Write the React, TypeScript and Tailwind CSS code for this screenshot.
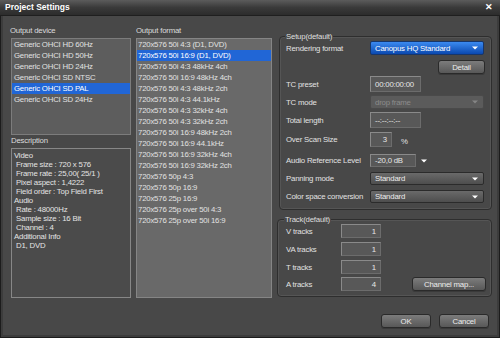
import React from 'react';

const devices = [
  'Generic OHCI HD 60Hz',
  'Generic OHCI HD 50Hz',
  'Generic OHCI HD 24Hz',
  'Generic OHCI SD NTSC',
  'Generic OHCI SD PAL',
  'Generic OHCI SD 24Hz',
];

const formats = [
  '720x576 50i 4:3 (D1, DVD)',
  '720x576 50i 16:9 (D1, DVD)',
  '720x576 50i 4:3 48kHz 4ch',
  '720x576 50i 16:9 48kHz 4ch',
  '720x576 50i 4:3 48kHz 2ch',
  '720x576 50i 4:3 44.1kHz',
  '720x576 50i 4:3 32kHz 4ch',
  '720x576 50i 4:3 32kHz 2ch',
  '720x576 50i 16:9 48kHz 2ch',
  '720x576 50i 16:9 44.1kHz',
  '720x576 50i 16:9 32kHz 4ch',
  '720x576 50i 16:9 32kHz 2ch',
  '720x576 50p 4:3',
  '720x576 50p 16:9',
  '720x576 25p 16:9',
  '720x576 25p over 50i 4:3',
  '720x576 25p over 50i 16:9',
];

const description = [
  'Video',
  ' Frame size : 720 x 576',
  ' Frame rate : 25,00( 25/1 )',
  ' Pixel aspect : 1,4222',
  ' Field order : Top Field First',
  'Audio',
  ' Rate : 48000Hz',
  ' Sample size : 16 Bit',
  ' Channel : 4',
  'Additional Info',
  ' D1, DVD',
];

function Arrow({ dim }: { dim?: boolean }) {
  return (
    <svg width="6" height="4" viewBox="0 0 6 4" className="shrink-0">
      <path d="M0 0.5h6L3 3.5z" fill={dim ? '#858585' : '#ffffff'} />
    </svg>
  );
}

function Select({ text, kind }: { text: string; kind: 'blue' | 'grey' | 'off' }) {
  const look =
    kind === 'blue'
      ? 'bg-gradient-to-b from-[#3b8af0] to-[#0a48b0] border-[#17366a] text-white'
      : kind === 'grey'
        ? 'bg-gradient-to-b from-[#6a6a6a] to-[#4e4e4e] border-[#2b2b2b] text-[#ececec]'
        : 'bg-[#5b5b5b] border-[#4a4a4a] text-[#8c8c8c]';
  return (
    <div className={`w-[114px] h-full flex items-center justify-between pl-[4px] pr-[5px] border rounded-[2px] ${look}`}>
      <span>{text}</span>
      <Arrow dim={kind === 'off'} />
    </div>
  );
}

function Field({ text, w, right }: { text: string; w: string; right?: boolean }) {
  return (
    <div
      className={`${w} h-full flex items-center px-[4px] bg-[#585858] border border-t-[#8a8a8a] border-l-[#8a8a8a] border-b-[#6c6c6c] border-r-[#6c6c6c] text-[#e6e6e6] ${right ? 'justify-end' : ''}`}
    >
      {text}
    </div>
  );
}

function Button({ text, w }: { text: string; w: string }) {
  return (
    <div
      className={`${w} h-[14px] flex items-center justify-center rounded-[3px] border border-[#2a2a2a] bg-gradient-to-b from-[#7c7c7c] to-[#585858] text-[#ededed] shadow-[0_1px_0_#3a3a3a]`}
    >
      {text}
    </div>
  );
}

export default function App() {
  return (
    <div className="w-[500px] h-[338px] bg-[#484848] text-[7.8px] tracking-[-0.2px] leading-[11px] text-[#e2e2e2] font-['Liberation_Sans',Arial,sans-serif] flex flex-col shadow-[inset_0_0_0_1px_#1c1c1c,inset_0_0_0_3px_#3c3c3c] overflow-hidden">
      {/* title bar */}
      <div className="h-[16px] shrink-0 flex items-center justify-between pl-[5px] pr-[7px] bg-gradient-to-b from-[#5c5c5c] via-[#3a3a3a] to-[#2c2c2c] border-b border-[#1f1f1f]">
        <span className="text-[8.5px] font-bold tracking-[0px] text-white">Project Settings</span>
        <span className="text-[9px] font-bold text-white">✕</span>
      </div>

      <div className="h-[284px] shrink-0 flex">
        {/* left column */}
        <div className="w-[120px] ml-[11px] flex flex-col">
          <div className="mt-[10px] h-[10px] leading-[10px] -ml-[1px] text-[#dcdcdc]">Output device</div>
          <div className="mt-[2px] h-[97px] bg-[#5d5d5d] border border-[#7c7c7c]">
            {devices.map((d, i) => (
              <div
                key={d}
                className={`h-[11px] pl-[2px] ${i === 4 ? 'bg-[#2166d6] text-white' : ''}`}
              >
                {d}
              </div>
            ))}
          </div>
          <div className="mt-[1px] h-[10px] leading-[10px] text-[#dcdcdc]">Description</div>
          <div className="mt-[2px] h-[150px] bg-[#4b4b4b] border border-[#878787] pt-[2px] pl-[2px] leading-[9px] text-[#e4e4e4]">
            {description.map((l, i) => (
              <div key={i} className={`h-[9px] ${l.startsWith(' ') ? 'pl-[2px]' : ''}`}>
                {l.trim()}
              </div>
            ))}
          </div>
        </div>

        {/* middle column */}
        <div className="w-[136px] ml-[5px] flex flex-col">
          <div className="mt-[10px] h-[10px] leading-[10px] text-[#dcdcdc]">Output format</div>
          <div className="mt-[2px] h-[260px] bg-[#696969] border border-[#858585]">
            {formats.map((f, i) => (
              <div key={f} className={`h-[11px] pl-[1px] ${i === 1 ? 'bg-[#2166d6] text-white' : ''}`}>
                {f}
              </div>
            ))}
          </div>
        </div>

        {/* right column */}
        <div className="w-[215px] ml-[5px] flex flex-col">
          {/* Setup(default) */}
          <div className="relative mt-[20px] ml-[2px] w-[213px] h-[174px] border border-[#2e2e2e] rounded-[4px] shadow-[inset_0_0_0_1px_#555555] flex flex-col">
            <span className="absolute -top-[6px] left-[5px] h-[11px] px-[1px] bg-[#484848] text-[#dedede]">Setup(default)</span>
            <div className="mt-[4px] h-[14px] flex items-center">
              <span className="w-[90px] pl-[6px]">Rendering format</span>
              <Select text="Canopus HQ Standard" kind="blue" />
            </div>
            <div className="mt-[5px] h-[14px] flex justify-end pr-[6px]">
              <Button text="Detail" w="w-[47px]" />
            </div>
            <div className="mt-[2px] h-[16px] flex items-center">
              <span className="w-[90px] pl-[6px]">TC preset</span>
              <Field text="00:00:00:00" w="w-[51px]" />
            </div>
            <div className="mt-[3px] h-[14px] flex items-center">
              <span className="w-[90px] pl-[6px]">TC mode</span>
              <Select text="drop frame" kind="off" />
            </div>
            <div className="mt-[3px] h-[16px] flex items-center">
              <span className="w-[90px] pl-[6px]">Total length</span>
              <Field text="--:--:--:--" w="w-[51px]" />
            </div>
            <div className="mt-[4px] h-[15px] flex items-center">
              <span className="w-[90px] pl-[6px]">Over Scan Size</span>
              <Field text="3" w="w-[22px]" right />
              <span className="ml-[9px] mt-[3px]">%</span>
            </div>
            <div className="mt-[7px] h-[13px] flex items-center">
              <span className="w-[90px] pl-[6px]">Audio Reference Level</span>
              <Field text="-20,0 dB" w="w-[46px]" />
              <span className="ml-[5px]">
                <Arrow />
              </span>
            </div>
            <div className="mt-[5px] h-[13px] flex items-center">
              <span className="w-[90px] pl-[6px]">Panning mode</span>
              <Select text="Standard" kind="grey" />
            </div>
            <div className="mt-[5px] h-[13px] flex items-center">
              <span className="w-[90px] pl-[6px]">Color space conversion</span>
              <Select text="Standard" kind="grey" />
            </div>
          </div>

          {/* Track(default) */}
          <div className="relative mt-[9px] w-[215px] h-[78px] border border-[#2e2e2e] rounded-[4px] shadow-[inset_0_0_0_1px_#555555] flex flex-col">
            <span className="absolute -top-[6px] left-[6px] h-[11px] px-[1px] bg-[#484848] text-[#dedede]">Track(default)</span>
            {['V tracks', 'VA tracks', 'T tracks', 'A tracks'].map((t, i) => (
              <div key={t} className={`${i === 3 ? 'mt-[3px]' : 'mt-[4px]'} h-[14px] flex items-center`}>
                <span className="w-[63px] pl-[8px]">{t}</span>
                <Field text={i === 3 ? '4' : '1'} w="w-[40px]" right />
                {i === 3 && (
                  <span className="ml-[31px]">
                    <Button text="Channel map..." w="w-[74px]" />
                  </span>
                )}
              </div>
            ))}
          </div>
        </div>
      </div>

      {/* footer */}
      <div className="mt-[14px] flex justify-end gap-[8px] pr-[11px]">
        <Button text="OK" w="w-[50px]" />
        <Button text="Cancel" w="w-[50px]" />
      </div>
    </div>
  );
}
